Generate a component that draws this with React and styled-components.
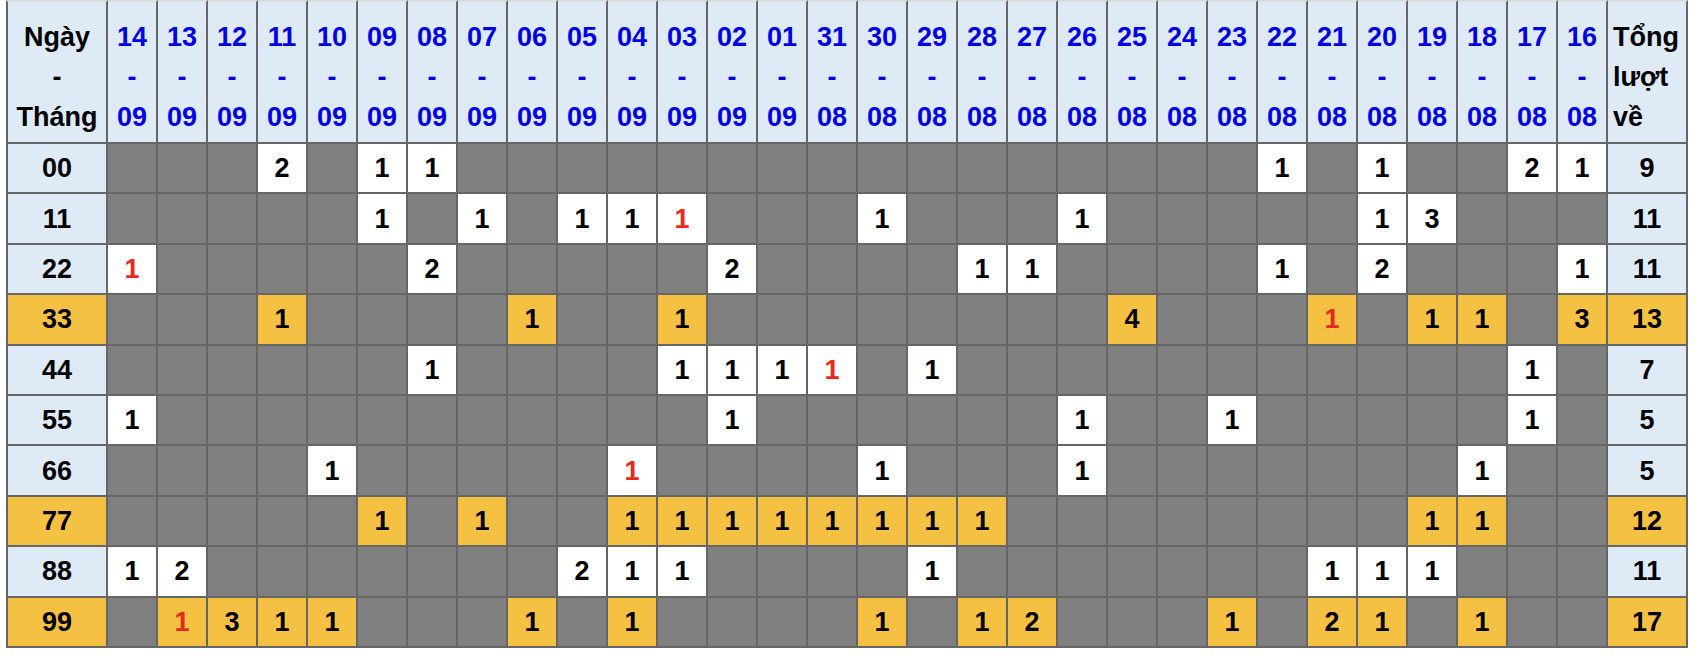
import React from "react";
import styled, { createGlobalStyle } from "styled-components";

const GlobalStyle = createGlobalStyle`
  html, body {
    margin: 0;
    padding: 0;
    background: #fff;
    font-family: "Liberation Sans", Arial, sans-serif;
  }
`;

const Wrap = styled.div`
  padding-left: 6px;
`;

const Table = styled.table`
  border-collapse: separate;
  border-spacing: 0;
  table-layout: fixed;
  width: 1682px;
  font-size: 27px;
  font-weight: 700;
  color: #000;
`;

const HeadCell = styled.th`
  height: 140px;
  box-sizing: border-box;
  padding: 15px 0 5px;
  background: #deeaf6;
  border-top: 2px solid #dcdcdc;
  border-right: 2px solid #666;
  border-bottom: 2px solid #666;
  border-left: ${(p) => (p.$first ? "2px solid #666" : "none")};
  line-height: 40px;
  vertical-align: middle;
  text-align: ${(p) => (p.$variant === "total" ? "left" : "center")};
  padding-left: ${(p) => (p.$variant === "total" ? "5px" : "0")};
  color: ${(p) => (p.$variant === "date" ? "#0000e6" : "#000")};
  font-weight: 700;
  overflow: visible;
  word-wrap: normal;
`;

const Cell = styled.td`
  height: 48.4px;
  padding: 0;
  text-align: center;
  vertical-align: middle;
  border-right: 2px solid #666;
  border-bottom: 2px solid #666;
  border-left: ${(p) => (p.$first ? "2px solid #666" : "none")};
  background: ${(p) =>
    ({ blue: "#deeaf6", gray: "#808080", white: "#fff", yellow: "#f5c143" })[p.$tone]};
  color: ${(p) => (p.$red ? "#e8291c" : "#000")};
  line-height: 30px;
`;

const dates = [
  "14-09", "13-09", "12-09", "11-09", "10-09", "09-09", "08-09", "07-09",
  "06-09", "05-09", "04-09", "03-09", "02-09", "01-09", "31-08", "30-08",
  "29-08", "28-08", "27-08", "26-08", "25-08", "24-08", "23-08", "22-08",
  "21-08", "20-08", "19-08", "18-08", "17-08", "16-08",
];

// value "r1" = red number
const rows = [
  { label: "00", total: 9, hot: false, hits: { "11-09": "2", "09-09": "1", "08-09": "1", "22-08": "1", "20-08": "1", "17-08": "2", "16-08": "1" } },
  { label: "11", total: 11, hot: false, hits: { "09-09": "1", "07-09": "1", "05-09": "1", "04-09": "1", "03-09": "r1", "30-08": "1", "26-08": "1", "20-08": "1", "19-08": "3" } },
  { label: "22", total: 11, hot: false, hits: { "14-09": "r1", "08-09": "2", "02-09": "2", "28-08": "1", "27-08": "1", "22-08": "1", "20-08": "2", "16-08": "1" } },
  { label: "33", total: 13, hot: true, hits: { "11-09": "1", "06-09": "1", "03-09": "1", "25-08": "4", "21-08": "r1", "19-08": "1", "18-08": "1", "16-08": "3" } },
  { label: "44", total: 7, hot: false, hits: { "08-09": "1", "03-09": "1", "02-09": "1", "01-09": "1", "31-08": "r1", "29-08": "1", "17-08": "1" } },
  { label: "55", total: 5, hot: false, hits: { "14-09": "1", "02-09": "1", "26-08": "1", "23-08": "1", "17-08": "1" } },
  { label: "66", total: 5, hot: false, hits: { "10-09": "1", "04-09": "r1", "30-08": "1", "26-08": "1", "18-08": "1" } },
  { label: "77", total: 12, hot: true, hits: { "09-09": "1", "07-09": "1", "04-09": "1", "03-09": "1", "02-09": "1", "01-09": "1", "31-08": "1", "30-08": "1", "29-08": "1", "28-08": "1", "19-08": "1", "18-08": "1" } },
  { label: "88", total: 11, hot: false, hits: { "14-09": "1", "13-09": "2", "05-09": "2", "04-09": "1", "03-09": "1", "29-08": "1", "21-08": "1", "20-08": "1", "19-08": "1" } },
  { label: "99", total: 17, hot: true, hits: { "13-09": "r1", "12-09": "3", "11-09": "1", "10-09": "1", "06-09": "1", "04-09": "1", "30-08": "1", "28-08": "1", "27-08": "2", "23-08": "1", "21-08": "2", "20-08": "1", "18-08": "1" } },
];

export default function App() {
  return (
    <Wrap>
      <GlobalStyle />
      <Table>
        <colgroup>
          <col style={{ width: 102 }} />
          {dates.map((d) => (
            <col key={d} style={{ width: 50 }} />
          ))}
          <col style={{ width: 80 }} />
        </colgroup>
        <thead>
          <tr>
            <HeadCell $first $variant="label">
              Ngày<br />-<br />Tháng
            </HeadCell>
            {dates.map((d) => {
              const [day, month] = d.split("-");
              return (
                <HeadCell key={d} $variant="date">
                  {day}<br />-<br />{month}
                </HeadCell>
              );
            })}
            <HeadCell $variant="total">Tổng lượt về</HeadCell>
          </tr>
        </thead>
        <tbody>
          {rows.map((row) => {
            const tone = row.hot ? "yellow" : "blue";
            return (
              <tr key={row.label}>
                <Cell $first $tone={tone}>{row.label}</Cell>
                {dates.map((d) => {
                  const v = row.hits[d];
                  if (!v) return <Cell key={d} $tone="gray" />;
                  const red = v.startsWith("r");
                  return (
                    <Cell key={d} $tone={row.hot ? "yellow" : "white"} $red={red}>
                      {red ? v.slice(1) : v}
                    </Cell>
                  );
                })}
                <Cell $tone={tone}>{row.total}</Cell>
              </tr>
            );
          })}
        </tbody>
      </Table>
    </Wrap>
  );
}
